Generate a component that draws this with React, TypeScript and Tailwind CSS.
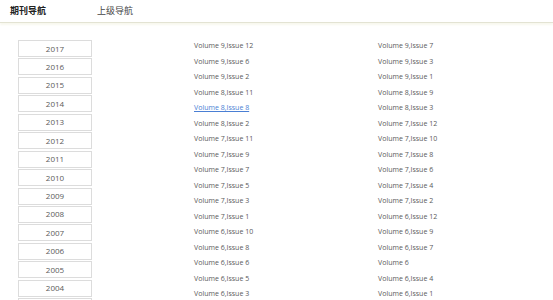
import React from "react";

const years = [2017, 2016, 2015, 2014, 2013, 2012, 2011, 2010, 2009, 2008, 2007, 2006, 2005, 2004, 2003];

const colA = [
  "Volume 9,Issue 12",
  "Volume 9,Issue 6",
  "Volume 9,Issue 2",
  "Volume 8,Issue 11",
  "Volume 8,Issue 8",
  "Volume 8,Issue 2",
  "Volume 7,Issue 11",
  "Volume 7,Issue 9",
  "Volume 7,Issue 7",
  "Volume 7,Issue 5",
  "Volume 7,Issue 3",
  "Volume 7,Issue 1",
  "Volume 6,Issue 10",
  "Volume 6,Issue 8",
  "Volume 6,Issue 6",
  "Volume 6,Issue 5",
  "Volume 6,Issue 3",
];

const colB = [
  "Volume 9,Issue 7",
  "Volume 9,Issue 3",
  "Volume 9,Issue 1",
  "Volume 8,Issue 9",
  "Volume 8,Issue 3",
  "Volume 7,Issue 12",
  "Volume 7,Issue 10",
  "Volume 7,Issue 8",
  "Volume 7,Issue 6",
  "Volume 7,Issue 4",
  "Volume 7,Issue 2",
  "Volume 6,Issue 12",
  "Volume 6,Issue 9",
  "Volume 6,Issue 7",
  "Volume 6",
  "Volume 6,Issue 4",
  "Volume 6,Issue 1",
];

function IssueColumn({ items }: { items: string[] }) {
  return (
    <ul className="flex flex-col">
      {items.map((label) => (
        <li key={label} className="h-[15.5px] leading-[15.5px] whitespace-nowrap">
          {label === "Volume 8,Issue 8" ? (
            <a href="#" className="text-[#4a7fd4] underline">{label}</a>
          ) : (
            <span className="text-[#5a5a5a]">{label}</span>
          )}
        </li>
      ))}
    </ul>
  );
}

export default function App() {
  return (
    <div className="w-[553px] h-[300px] overflow-hidden bg-white font-['Open_Sans','Noto_Sans_CJK_SC',sans-serif]">
      {/* Header tabs */}
      <div className="h-[23px] border-b border-[#e3e3d3] shadow-[0_2px_2px_#f8f8ee] flex items-center text-[9px]">
        <span className="ml-[10px] font-bold text-[#222]">期刊导航</span>
        <span className="ml-[51px] text-[#444]">上级导航</span>
      </div>

      <div className="flex">
        {/* Years */}
        <div className="ml-[18px] mt-[17px] w-[74px] shrink-0 flex flex-col gap-[1.45px]">
          {years.map((y) => (
            <button
              key={y}
              className="w-full h-[17px] border border-[#dcdcdc] bg-white text-[8px] text-[#5a5a5a] flex items-center justify-center"
            >
              {y}
            </button>
          ))}
        </div>

        {/* Issues */}
        <div className="ml-[102px] mt-[15px] grid grid-cols-[184px_184px] text-[7px]">
          <IssueColumn items={colA} />
          <IssueColumn items={colB} />
        </div>
      </div>
    </div>
  );
}
